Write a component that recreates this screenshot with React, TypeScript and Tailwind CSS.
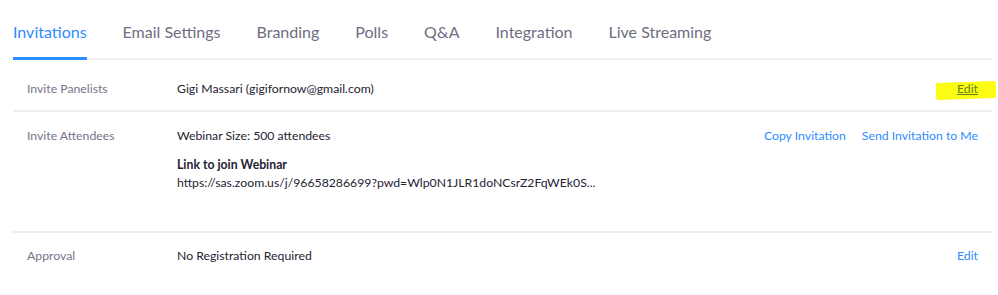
import React from "react";

const tabs = ["Invitations", "Email Settings", "Branding", "Polls", "Q&A", "Integration", "Live Streaming"];

export default function App() {
  return (
    <div className="w-[998px] h-[295px] bg-white font-['Lato','Open_Sans',sans-serif] overflow-hidden">
      <div className="ml-[13px] w-[979px]">
        <div className="h-[60px] flex gap-[36px] border-b-2 border-[#f2f2f3]">
          {tabs.map((t, i) => (
            <div
              key={t}
              className={
                "h-[60px] -mb-[2px] pt-[20px] text-[16px] leading-[24px] " +
                (i === 0 ? "text-[#2d8cff] border-b-[3px] border-[#2d8cff]" : "text-[#6e6e80]")
              }
            >
              {t}
            </div>
          ))}
        </div>

        <div className="h-[52px] border-b-2 border-[#ededed] pt-[19px] flex text-[12.25px] leading-[20px]">
          <div className="w-[164px] pl-[14px] text-[#747487]">Invite Panelists</div>
          <div className="flex-1 text-[#232333]">Gigi Massari (gigifornow@gmail.com)</div>
          <div className="pr-[14px]">
            <span className="relative inline-block">
              <span className="absolute left-[-21px] top-[3px] w-[60px] h-[17px] bg-[#fbfb14] -rotate-[2deg] rounded-[2px]"></span>
              <span className="relative text-[#5e8a10] underline">Edit</span>
            </span>
          </div>
        </div>

        <div className="h-[121px] border-b-2 border-[#ededed] pt-[14px] flex text-[12.25px] leading-[20px]">
          <div className="w-[164px] pl-[14px] text-[#747487]">Invite Attendees</div>
          <div className="flex-1 text-[#232333]">
            <div>Webinar Size: 500 attendees</div>
            <div className="mt-[10px] font-bold leading-[18px]">Link to join Webinar</div>
            <div className="leading-[18px]">https://sas.zoom.us/j/96658286699?pwd=Wlp0N1JLR1doNCsrZ2FqWEk0S...</div>
          </div>
          <div className="pr-[14px] flex gap-[16px] text-[#2d8cff]">
            <span>Copy Invitation</span>
            <span>Send Invitation to Me</span>
          </div>
        </div>

        <div className="pt-[13px] flex text-[12.25px] leading-[20px]">
          <div className="w-[164px] pl-[14px] text-[#747487]">Approval</div>
          <div className="flex-1 text-[#232333]">No Registration Required</div>
          <div className="pr-[14px] text-[#2d8cff]">Edit</div>
        </div>
      </div>
    </div>
  );
}
